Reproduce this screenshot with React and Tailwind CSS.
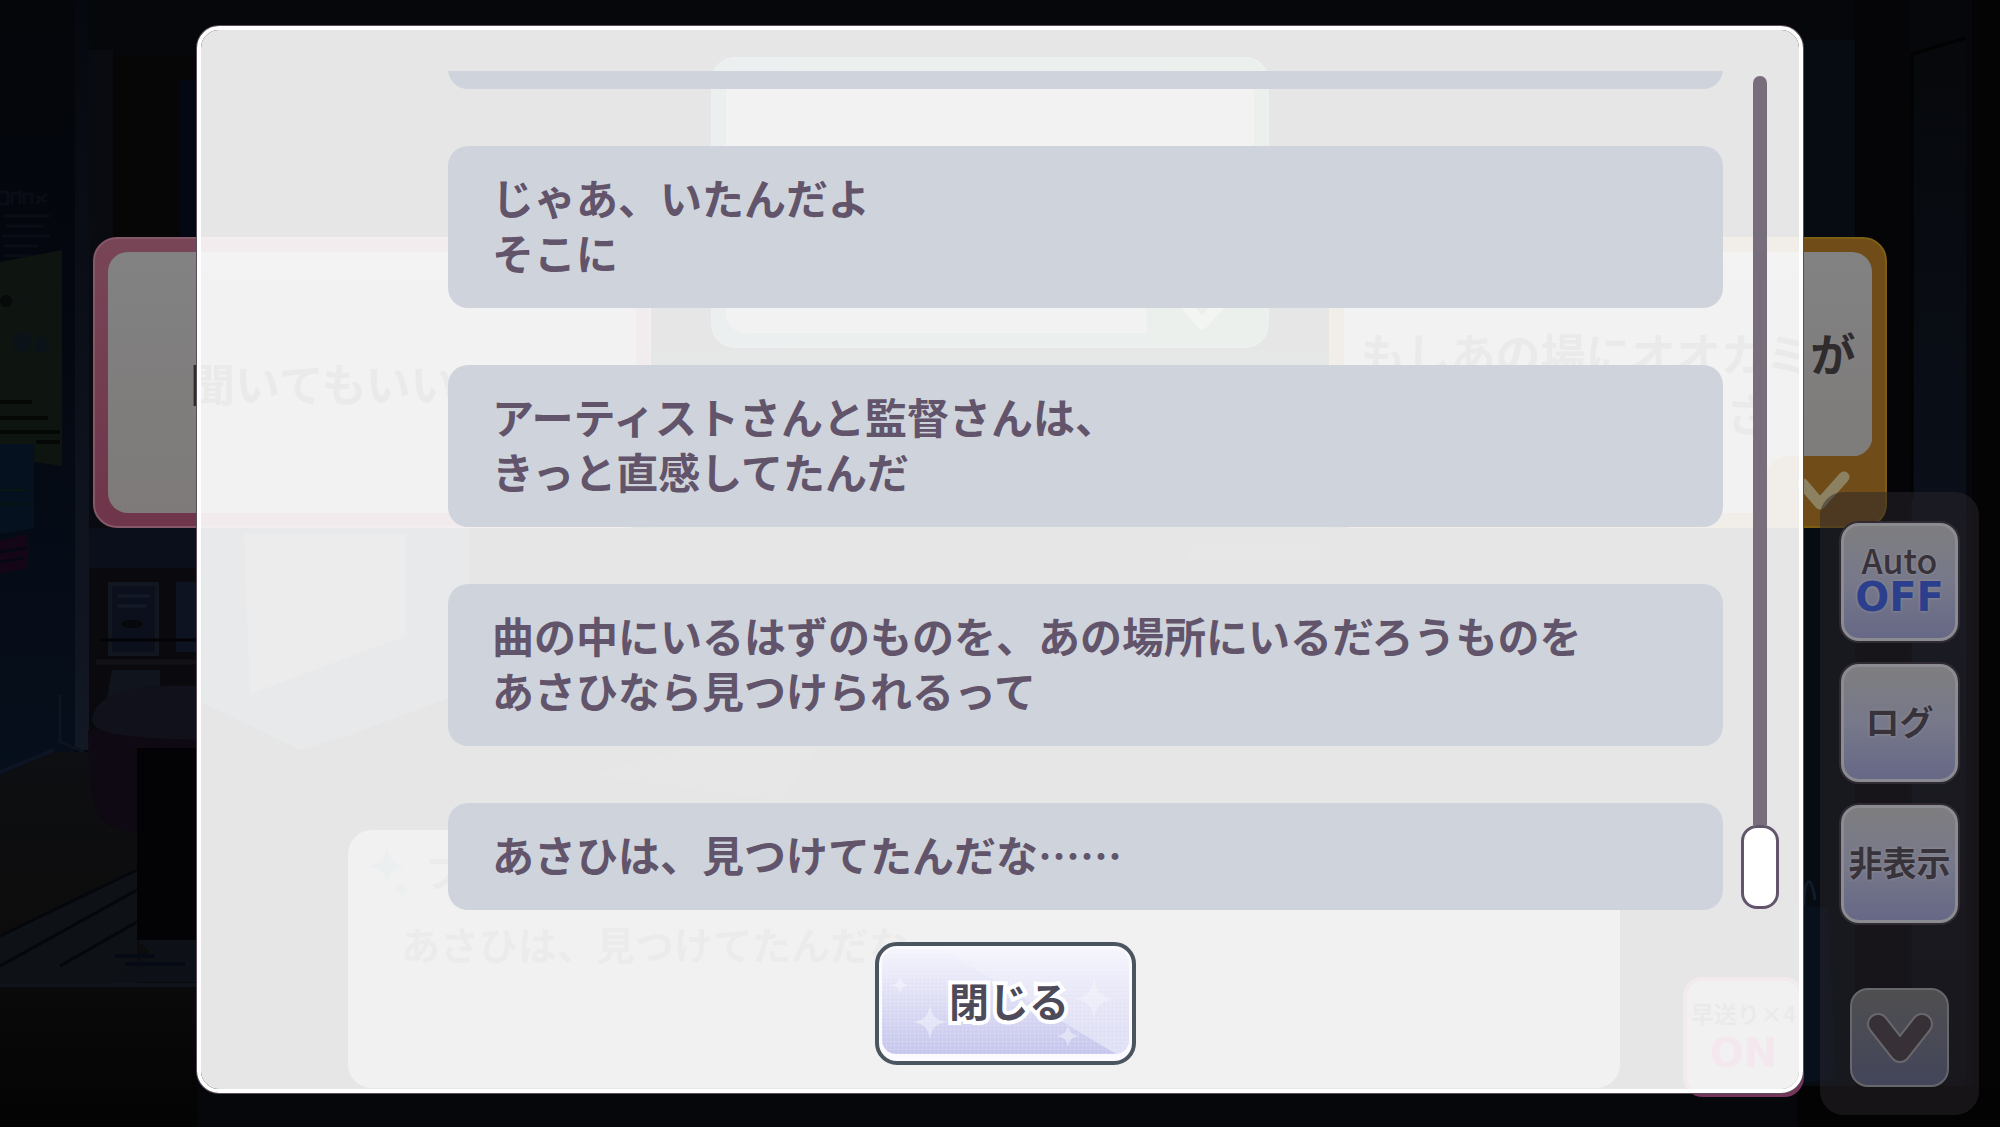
const LOG = [
  ['', ''],
  ['じゃあ、いたんだよ', 'そこに'],
  ['アーティストさんと監督さんは、', 'きっと直感してたんだ'],
  ['曲の中にいるはずのものを、あの場所にいるだろうものを', 'あさひなら見つけられるって'],
  ['あさひは、見つけてたんだな……'],
]

const STAR = 'M0 -10 C1.5 -3 3 -1.5 10 0 C3 1.5 1.5 3 0 10 C-1.5 3 -3 1.5 -10 0 C-3 -1.5 -1.5 -3 0 -10Z'

function Room() {
  return (
    <svg
      className="absolute inset-0 h-full w-full"
      viewBox="0 0 2000 1127"
      preserveAspectRatio="none"
      aria-hidden="true"
    >
      <defs>
        <linearGradient id="wall" x1="0" y1="0" x2="0" y2="1">
          <stop offset="0" stopColor="#04060a" />
          <stop offset="0.35" stopColor="#04070f" />
          <stop offset="1" stopColor="#060f1c" />
        </linearGradient>
        <linearGradient id="pillar" x1="0" y1="0" x2="0" y2="1">
          <stop offset="0" stopColor="#06080f" />
          <stop offset="1" stopColor="#121824" />
        </linearGradient>
        <linearGradient id="door" x1="0" y1="0" x2="0" y2="1">
          <stop offset="0" stopColor="#06080b" />
          <stop offset="0.5" stopColor="#0b101b" />
          <stop offset="1" stopColor="#08090d" />
        </linearGradient>
        <linearGradient id="floor" x1="0" y1="0" x2="0" y2="1">
          <stop offset="0" stopColor="#0e0f12" />
          <stop offset="0.5" stopColor="#0c0c0c" />
          <stop offset="1" stopColor="#040304" />
        </linearGradient>
      </defs>
      <rect width="2000" height="1127" fill="#05070b" />
      <rect width="75" height="780" fill="url(#wall)" />
      <rect x="75" width="14" height="750" fill="url(#pillar)" />
      <rect x="89" y="50" width="24" height="690" fill="#090b10" />
      <rect x="113" y="55" width="84" height="186" fill="#060607" />
      <rect x="180" y="80" width="17" height="160" fill="#040813" />
      <rect x="89" y="528" width="108" height="60" fill="#0a0f1b" />

      {/* posters */}
      <g stroke="#090d16" strokeWidth="3" fill="none">
        <path d="M0 192 H8 V204 H0 M12 204 V194 L20 192 V204 M24 204 V194 H32 V204 M36 196 L46 202 M46 194 L36 204" />
        <path d="M2 216 H50 M6 226 H44 M2 236 H50 M4 246 H38 M4 256 H50" />
      </g>
      <path d="M0 262 L62 250 V466 L34 462 H0Z" fill="#0e140f" />
      <circle cx="6" cy="301" r="6" fill="#070a0a" />
      <circle cx="22" cy="342" r="10" fill="#0c1318" />
      <circle cx="42" cy="345" r="8" fill="#0c1318" />
      <circle cx="30" cy="298" r="8" fill="#0d1412" />
      <path d="M0 402 H32 M0 418 H48 M0 432 H60 M36 442 H60" stroke="#050806" strokeWidth="4" />
      <path d="M0 444 H34 V528 L0 534Z" fill="#05111e" />
      <path d="M0 490 H28 M0 504 H28" stroke="#0a1410" strokeWidth="2" />
      <path d="M0 541 L28 534 V568 L0 574Z" fill="#150617" />
      <path d="M0 552 L26 548 M0 562 L24 558" stroke="#050812" strokeWidth="3" />

      {/* shelf */}
      <rect x="89" y="568" width="108" height="170" fill="#0a0a0e" />
      <rect x="110" y="584" width="47" height="70" fill="#0b101c" stroke="#12161f" strokeWidth="4" />
      <path d="M118 596 H150 M118 606 H146" stroke="#141a28" strokeWidth="3" />
      <ellipse cx="132" cy="624" rx="11" ry="4" fill="#06080d" />
      <rect x="176" y="582" width="21" height="70" fill="#0e1322" />
      <path d="M100 640 H197" stroke="#040406" strokeWidth="3" />
      <path d="M96 662 H197" stroke="#121116" strokeWidth="5" />
      <path d="M112 670 H160 V704 H106Z" fill="#10141d" />
      <rect x="166" y="686" width="31" height="12" fill="#10141d" />
      <path d="M60 695 V742 L84 752" stroke="#0e141f" strokeWidth="3" fill="none" />

      {/* floor, stool and table */}
      <path d="M0 775 L54 752 H197 V1127 H0Z" fill="url(#floor)" />
      <path d="M0 772 L54 750" stroke="#0d1424" strokeWidth="4" />
      <path d="M0 936 L137 868 V985 H0Z" fill="#0e1217" />
      <path d="M0 936 L137 870 M0 966 L137 890 M60 966 L137 922" stroke="#05070d" strokeWidth="3" />
      <path d="M0 985 H197" stroke="#0f131a" strokeWidth="4" />
      <path d="M88 730 C90 800 90 832 137 832 H197 V730Z" fill="#0e0912" />
      <path d="M92 720 C96 690 140 684 197 686 V740 C150 738 94 738 92 720Z" fill="#11111b" />
      <rect x="137" y="748" width="60" height="192" fill="#030305" />
      <path d="M137 940 H197 V982 H110 L150 952Z" fill="#0d1117" />
      <path d="M115 956 H155 M125 964 H185" stroke="#060a14" strokeWidth="4" />

      {/* window light in the middle of the room */}
      <path d="M197 528 H470 V690 L350 735 L300 750 L197 700Z" fill="#16222c" />
      <path d="M244 534 H406 V636 L250 694Z" fill="#3c3c3c" />
      <rect x="650" y="350" width="680" height="180" fill="#0a0c10" />
      <path d="M590 775 L700 745 H820 L780 800Z" fill="#0c1018" />
      <path d="M1190 545 H1320 V560 H1190Z" fill="#0f0f10" />

      {/* right hand wall */}
      <rect x="1803" y="40" width="52" height="1087" fill="#070b12" />
      <rect x="1855" y="0" width="55" height="1127" fill="#050507" />
      <path d="M1912 54 L1966 38 V1127 H1912Z" fill="url(#door)" />
      <path d="M1912 54 L1966 38 M1912 54 V500" stroke="#020203" strokeWidth="3" fill="none" />
      <rect x="1972" width="28" height="1127" fill="#040405" />
      <path d="M1804 905 C1804 875 1812 875 1815 900" stroke="#101c2b" strokeWidth="3" fill="none" />
      <path d="M1796 904 L1828 908 L1836 1078 L1796 1084Z" fill="#07101b" />
      <rect x="1797" y="1086" width="203" height="41" fill="#040304" />
    </svg>
  )
}

function Choice({ frame, notch, corner, tick, className, children }) {
  return (
    <button
      type="button"
      className={`relative h-[291px] rounded-3xl border-2 p-[13px] text-[45px] leading-[60px] font-bold text-[#302b2d] ${frame} ${className}`}
    >
      <span className="flex h-full flex-col justify-center rounded-[20px] bg-linear-to-b from-[#828282] to-[#7d7a79]">
        {children}
      </span>
      <span className={`absolute right-[13px] bottom-[70px] size-5 ${corner}`} />
      <span className={`absolute right-0 bottom-0 h-[70px] w-[120px] rounded-tl-3xl rounded-br-3xl ${notch}`}>
        <svg className="absolute right-[34px] bottom-[12px] h-11 w-14" viewBox="0 0 56 44" fill="none" aria-hidden="true">
          <path
            className={tick}
            d="M8 14 L25 34 L49 7"
            strokeWidth="11"
            strokeLinecap="round"
            strokeLinejoin="round"
          />
        </svg>
      </span>
    </button>
  )
}

function Choices() {
  return (
    <div className="grid grid-cols-3 items-start gap-[60px] pr-[113px] pl-[93px]">
      <Choice
        className="mt-[180px]"
        frame="border-[#855868] bg-linear-to-b from-[#784557] to-[#6f354a]"
        notch="bg-[#6f354a]"
        corner="bg-[radial-gradient(circle_at_0_0,transparent_20px,#6f354a_21px)]"
        tick="stroke-[#8a7480]"
      >
        <span className="pl-[82px] text-left">聞いてもいい</span>
      </Choice>
      <Choice
        className=""
        frame="border-[#3f6a64] bg-linear-to-r from-[#33605e] to-[#3a6446]"
        notch="bg-[#3a6446]"
        corner="bg-[radial-gradient(circle_at_0_0,transparent_20px,#3a6446_21px)]"
        tick="stroke-[#8a9a8a]"
      />
      <Choice
        className="mt-[180px]"
        frame="border-[#7d5f14] bg-[#704c18]"
        notch="bg-[#704c18]"
        corner="bg-[radial-gradient(circle_at_0_0,transparent_20px,#704c18_21px)]"
        tick="stroke-[#8c8262]"
      >
        <span>もしあの場にオオカミが</span>
        <span className="pr-[101px] text-right">さ</span>
      </Choice>
    </div>
  )
}

function Message() {
  return (
    <div className="h-[258px] flex-1 rounded-3xl bg-[#757575] pt-2 text-[39px] leading-[55px] font-bold text-[#3c3a3b]">
      <div className="ml-4 flex h-[68px] items-center gap-4 border-b-4 border-dotted border-[#4c5a5e]">
        <svg className="h-14 w-11" viewBox="0 0 44 56" aria-hidden="true">
          <path d={STAR} transform="translate(23 24) scale(1.9)" fill="#3d5a68" />
          <path d={STAR} transform="translate(37 47) scale(0.9)" fill="#3d5a68" />
        </svg>
        <span>フ</span>
      </div>
      <div className="pt-[10px] pl-[53px]">あさひは、見つけてたんだな</div>
    </div>
  )
}

function MenuButton({ children }) {
  return (
    <button
      type="button"
      className="flex h-[118px] w-[117px] flex-col items-center justify-center rounded-[18px] border-[3px] border-[#8b8b92] bg-linear-to-b from-[#7e7e80] via-[#77788a] to-[#666886] pb-1 font-bold text-[#38323a] ring-2 ring-[#302a33] [text-shadow:0_0_3px_#96969a]"
    >
      {children}
    </button>
  )
}

function SideMenu() {
  return (
    <nav className="absolute top-[492px] right-[21px] flex flex-col items-center gap-[23px] rounded-3xl bg-[#2a262c]/50 px-[21px] pt-[31px] pb-7">
      <MenuButton>
        <span className="text-[34px] leading-[34px] font-medium">Auto</span>
        <span className="font-['DejaVu_Sans',sans-serif] text-[40px] leading-[40px] text-[#2c3f8d]">OFF</span>
      </MenuButton>
      <MenuButton>
        <span className="text-[34px] leading-[40px]">ログ</span>
      </MenuButton>
      <MenuButton>
        <span className="text-[34px] leading-[40px] whitespace-nowrap">非表示</span>
      </MenuButton>
      <button
        type="button"
        aria-label="メニュー"
        className="mt-[42px] flex size-[99px] items-center justify-center rounded-[18px] border-2 border-[#66676a] bg-linear-to-b from-[#4f4f50] to-[#43455a]"
      >
        <svg className="h-14 w-[72px]" viewBox="0 0 72 56" fill="none" strokeLinecap="round" strokeLinejoin="round" aria-hidden="true">
          <path d="M14 14 L36 42 L58 14" stroke="#68686c" strokeWidth="22" />
          <path d="M14 14 L36 42 L58 14" stroke="#383037" strokeWidth="18" />
        </svg>
      </button>
    </nav>
  )
}

function CloseButton() {
  return (
    <button
      type="button"
      className="relative h-[123px] w-[261px] overflow-hidden rounded-[22px] border-4 border-[#4b555f] bg-[#fbfbff] p-[3px] pb-[7px]"
    >
      <svg className="h-full w-full rounded-[14px]" viewBox="0 0 247 105" preserveAspectRatio="none" aria-hidden="true">
        <defs>
          <linearGradient id="close" x1="0" y1="0" x2="0" y2="1">
            <stop offset="0" stopColor="#f4f4fd" />
            <stop offset="0.5" stopColor="#dcdcf5" />
            <stop offset="1" stopColor="#c4c4ee" />
          </linearGradient>
          <linearGradient id="shine" x1="0" y1="0" x2="0" y2="1">
            <stop offset="0" stopColor="#fff" stopOpacity="0.1" />
            <stop offset="1" stopColor="#fff" stopOpacity="0.45" />
          </linearGradient>
          <pattern id="mesh" width="4" height="4" patternUnits="userSpaceOnUse">
            <path d="M0 0 H4 M0 0 V4" stroke="#fff" strokeOpacity="0.25" />
          </pattern>
        </defs>
        <rect width="247" height="105" fill="url(#close)" />
        <rect width="247" height="105" fill="url(#mesh)" />
        <path d="M60 0 H247 V105 H234Z" fill="url(#shine)" />
        <g fill="#fff">
          <path d={STAR} transform="translate(48 73) scale(1.7)" opacity="0.4" />
          <path d={STAR} transform="translate(186 87) scale(1.1)" opacity="0.4" />
          <path d={STAR} transform="translate(18 36) scale(0.9)" opacity="0.4" />
          <path d={STAR} transform="translate(212 50) scale(2)" opacity="0.3" />
        </g>
      </svg>
      <span className="absolute inset-0 flex items-center justify-center pb-2 pl-2 text-[40px] font-bold text-[#4d4b5a] [-webkit-text-stroke:8px_#fff] [paint-order:stroke_fill]">
        閉じる
      </span>
    </button>
  )
}

function LogDialog() {
  return (
    <div className="absolute inset-0 flex px-[197px] pt-[26px] pb-[34px]">
      <section
        role="dialog"
        aria-label="ログ"
        className="flex min-w-0 flex-1 flex-col rounded-[22px] border-4 border-white bg-white/90 bg-clip-padding pt-[41px] pb-6 ring-1 ring-[#5d4c5c]"
      >
        <div className="flex min-h-0 flex-1 gap-[18px] pr-5 pl-[247px]">
          <div className="flex min-w-0 flex-1 flex-col justify-end gap-[57px] overflow-hidden">
            {LOG.map((lines, i) => (
              <div
                key={i}
                className="shrink-0 rounded-[20px] bg-[#cfd4dc] px-11 pt-[23px] pb-[29px] text-[42px] leading-[55px] font-bold text-[#62546a]"
              >
                {lines.map((line, n) => (
                  <p key={n} className="min-h-[55px] whitespace-nowrap">{line}</p>
                ))}
              </div>
            ))}
          </div>
          <div className="flex w-[38px] flex-col items-center pt-[5px] pb-px">
            <div className="w-[14px] flex-1 rounded-t-full bg-[#776d7b]" />
            <div className="h-[84px] w-[38px] rounded-2xl border-[3px] border-[#62546a] bg-white" />
          </div>
        </div>
        <div className="flex justify-center pt-8 pl-[10px]">
          <CloseButton />
        </div>
      </section>
    </div>
  )
}

export default function App() {
  return (
    <main className="relative h-screen w-full overflow-hidden bg-[#05070b] font-['Noto_Sans_CJK_JP',sans-serif]">
      <Room />
      <div className="absolute inset-0 flex flex-col justify-between pt-[57px] pb-[30px]">
        <Choices />
        <div className="flex items-end gap-[63px] pr-[196px] pl-[348px]">
          <div className="flex flex-1 pb-[9px]">
            <Message />
          </div>
          <button
            type="button"
            className="flex h-[120px] w-[121px] flex-col items-center justify-center rounded-[20px] border-4 border-[#74355a] bg-[#7a7777] pb-1 font-bold"
          >
            <span className="text-[23px] leading-[36px] whitespace-nowrap text-[#2c282a]">早送り×4</span>
            <span className="font-['DejaVu_Sans',sans-serif] text-[40px] leading-[44px] text-[#90104e]">ON</span>
          </button>
        </div>
      </div>
      <SideMenu />
      <LogDialog />
    </main>
  )
}
